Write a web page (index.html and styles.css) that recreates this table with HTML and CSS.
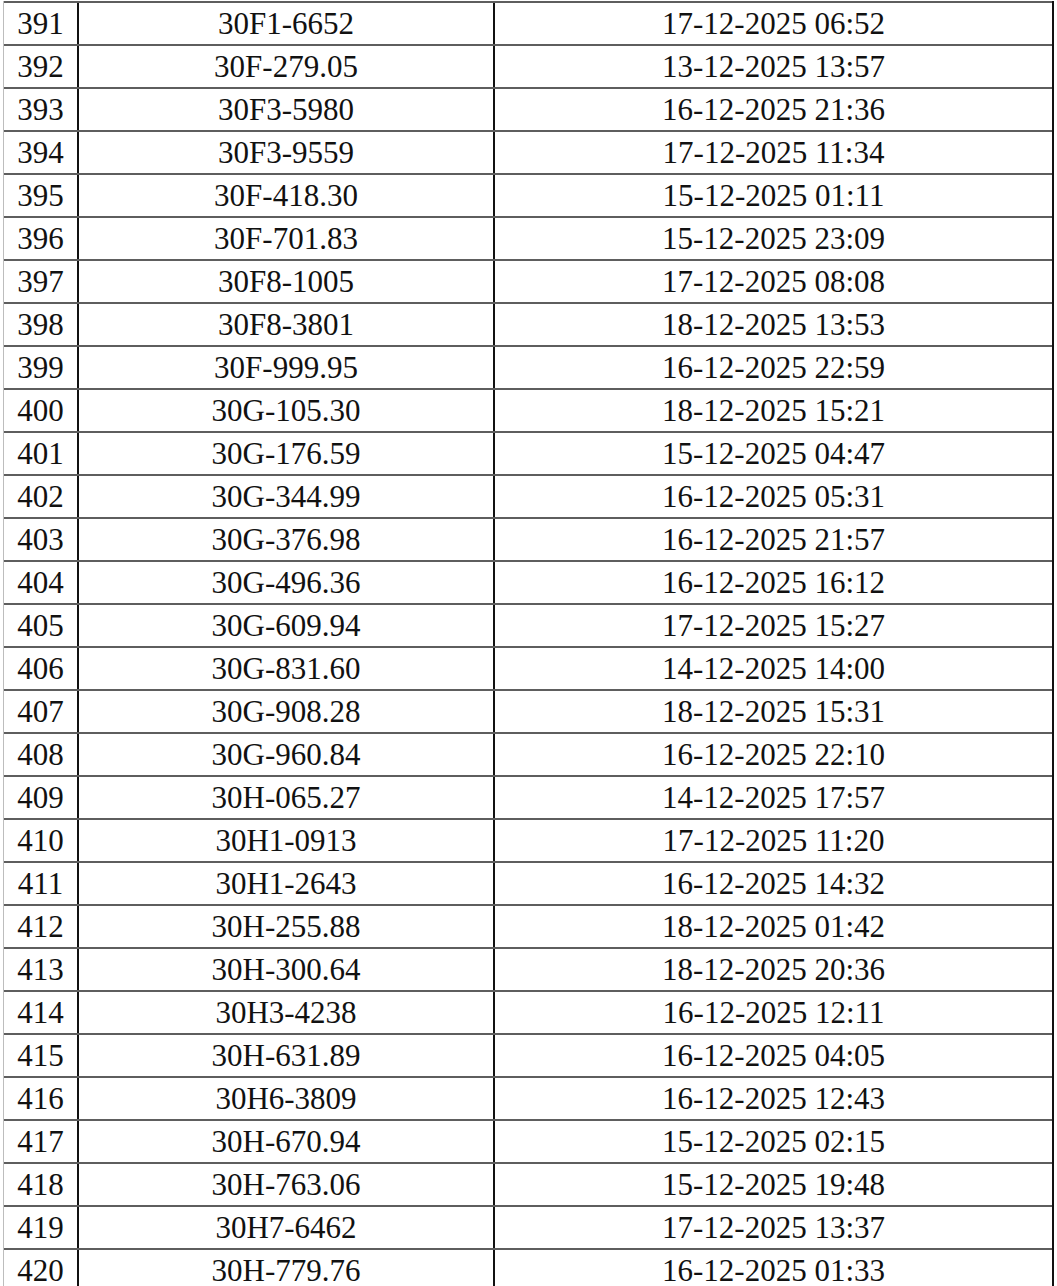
FILE: index.html
```html
<!DOCTYPE html>
<html>
<head>
<meta charset="utf-8">
<link rel="stylesheet" href="styles.css">
</head>
<body>
<div class="sheet">
<div class="row"><div class="c n">391</div><div class="c p">30F1-6652</div><div class="c d">17-12-2025 06:52</div></div>
<div class="row"><div class="c n">392</div><div class="c p">30F-279.05</div><div class="c d">13-12-2025 13:57</div></div>
<div class="row"><div class="c n">393</div><div class="c p">30F3-5980</div><div class="c d">16-12-2025 21:36</div></div>
<div class="row"><div class="c n">394</div><div class="c p">30F3-9559</div><div class="c d">17-12-2025 11:34</div></div>
<div class="row"><div class="c n">395</div><div class="c p">30F-418.30</div><div class="c d">15-12-2025 01:11</div></div>
<div class="row"><div class="c n">396</div><div class="c p">30F-701.83</div><div class="c d">15-12-2025 23:09</div></div>
<div class="row"><div class="c n">397</div><div class="c p">30F8-1005</div><div class="c d">17-12-2025 08:08</div></div>
<div class="row"><div class="c n">398</div><div class="c p">30F8-3801</div><div class="c d">18-12-2025 13:53</div></div>
<div class="row"><div class="c n">399</div><div class="c p">30F-999.95</div><div class="c d">16-12-2025 22:59</div></div>
<div class="row"><div class="c n">400</div><div class="c p">30G-105.30</div><div class="c d">18-12-2025 15:21</div></div>
<div class="row"><div class="c n">401</div><div class="c p">30G-176.59</div><div class="c d">15-12-2025 04:47</div></div>
<div class="row"><div class="c n">402</div><div class="c p">30G-344.99</div><div class="c d">16-12-2025 05:31</div></div>
<div class="row"><div class="c n">403</div><div class="c p">30G-376.98</div><div class="c d">16-12-2025 21:57</div></div>
<div class="row"><div class="c n">404</div><div class="c p">30G-496.36</div><div class="c d">16-12-2025 16:12</div></div>
<div class="row"><div class="c n">405</div><div class="c p">30G-609.94</div><div class="c d">17-12-2025 15:27</div></div>
<div class="row"><div class="c n">406</div><div class="c p">30G-831.60</div><div class="c d">14-12-2025 14:00</div></div>
<div class="row"><div class="c n">407</div><div class="c p">30G-908.28</div><div class="c d">18-12-2025 15:31</div></div>
<div class="row"><div class="c n">408</div><div class="c p">30G-960.84</div><div class="c d">16-12-2025 22:10</div></div>
<div class="row"><div class="c n">409</div><div class="c p">30H-065.27</div><div class="c d">14-12-2025 17:57</div></div>
<div class="row"><div class="c n">410</div><div class="c p">30H1-0913</div><div class="c d">17-12-2025 11:20</div></div>
<div class="row"><div class="c n">411</div><div class="c p">30H1-2643</div><div class="c d">16-12-2025 14:32</div></div>
<div class="row"><div class="c n">412</div><div class="c p">30H-255.88</div><div class="c d">18-12-2025 01:42</div></div>
<div class="row"><div class="c n">413</div><div class="c p">30H-300.64</div><div class="c d">18-12-2025 20:36</div></div>
<div class="row"><div class="c n">414</div><div class="c p">30H3-4238</div><div class="c d">16-12-2025 12:11</div></div>
<div class="row"><div class="c n">415</div><div class="c p">30H-631.89</div><div class="c d">16-12-2025 04:05</div></div>
<div class="row"><div class="c n">416</div><div class="c p">30H6-3809</div><div class="c d">16-12-2025 12:43</div></div>
<div class="row"><div class="c n">417</div><div class="c p">30H-670.94</div><div class="c d">15-12-2025 02:15</div></div>
<div class="row"><div class="c n">418</div><div class="c p">30H-763.06</div><div class="c d">15-12-2025 19:48</div></div>
<div class="row"><div class="c n">419</div><div class="c p">30H7-6462</div><div class="c d">17-12-2025 13:37</div></div>
<div class="row"><div class="c n">420</div><div class="c p">30H-779.76</div><div class="c d">16-12-2025 01:33</div></div>
</div>
</body>
</html>
```

FILE: styles.css
```css
html, body {
  margin: 0;
  padding: 0;
  background: #ffffff;
}
body {
  width: 1057px;
  overflow: hidden;
  font-family: "Liberation Serif", "Times New Roman", serif;
  color: #111111;
}
.sheet {
  margin: 1px 0 0 3px;
  width: 1051px;
  box-sizing: border-box;
  border-left: 1px solid #bdbdbd;
  border-right: 2px solid #111111;
}
.row {
  display: grid;
  grid-template-columns: 75px 416px 1fr;
  height: 43px;
  box-sizing: border-box;
  border-top: 2px solid #5e5e5e;
}
.c {
  font-size: 31px;
  line-height: 41px;
  text-align: center;
  white-space: nowrap;
}
.n, .p {
  border-right: 2px solid #111111;
}
```
